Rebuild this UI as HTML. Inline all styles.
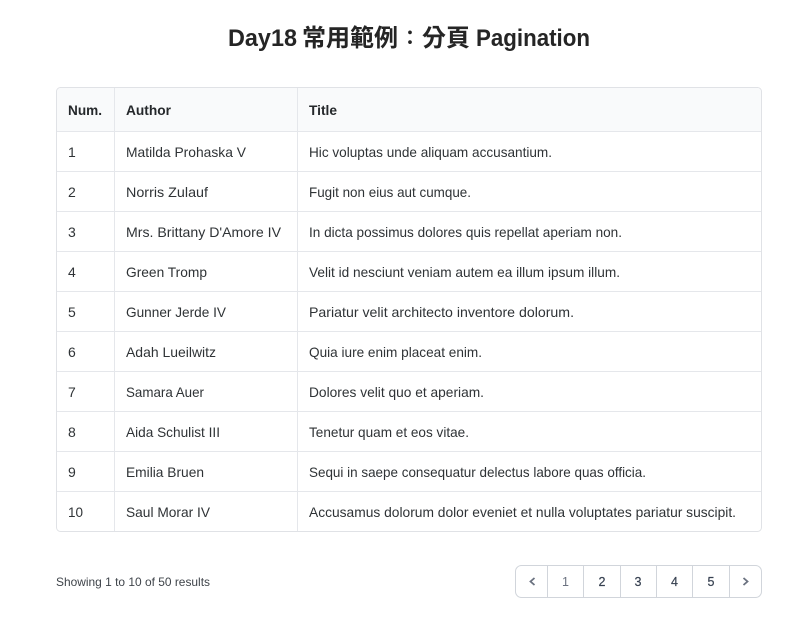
<!DOCTYPE html>
<html lang="zh-Hant">
<head>
<meta charset="utf-8">
<title>Day18 常用範例：分頁 Pagination</title>
<style>
html,body{margin:0;padding:0;background:#fff;width:810px;height:638px;overflow:hidden}
svg{display:block}
text{font-family:"Liberation Sans","Noto Sans CJK TC",sans-serif;fill:#2f3336}
.t{font-size:24px;font-weight:700;fill:#252525}
.k{font-family:"Noto Sans CJK TC",sans-serif}
.h{font-size:14px;font-weight:700;fill:#25282b}
.c{font-size:14px;fill:#2f3336}
.s{font-size:12px;fill:#3f444a}
.p{font-size:12.5px;fill:#374151;text-anchor:middle;stroke:#374151;stroke-width:.2}
</style>
</head>
<body>
<svg xmlns="http://www.w3.org/2000/svg" width="810" height="638" viewBox="0 0 810 638">
<text class="t" x="228" y="46" textLength="69" lengthAdjust="spacingAndGlyphs">Day18</text>
<text class="t k" x="302" y="46">常用範例</text>
<text class="t k" x="400" y="44.5" style="font-size:20px">：</text>
<text class="t k" x="422" y="46">分頁</text>
<text class="t" x="476" y="46" textLength="114" lengthAdjust="spacingAndGlyphs">Pagination</text>

<rect x="56.5" y="87.5" width="705" height="444" rx="4" fill="#fff" stroke="#e0e2e6"/>
<path d="M57 131V92a4 4 0 0 1 4-4H757a4 4 0 0 1 4 4V131Z" fill="#f9fafb"/>
<g fill="#e5e7eb">
<rect x="57" y="131" width="704" height="1"/>
<rect x="57" y="171" width="704" height="1"/>
<rect x="57" y="211" width="704" height="1"/>
<rect x="57" y="251" width="704" height="1"/>
<rect x="57" y="291" width="704" height="1"/>
<rect x="57" y="331" width="704" height="1"/>
<rect x="57" y="371" width="704" height="1"/>
<rect x="57" y="411" width="704" height="1"/>
<rect x="57" y="451" width="704" height="1"/>
<rect x="57" y="491" width="704" height="1"/>
<rect x="114" y="88" width="1" height="443"/>
<rect x="297" y="88" width="1" height="443"/>
</g>

<text class="h" x="68" y="115" textLength="34" lengthAdjust="spacingAndGlyphs">Num.</text>
<text class="h" x="126" y="115" textLength="45" lengthAdjust="spacingAndGlyphs">Author</text>
<text class="h" x="309" y="115" textLength="28" lengthAdjust="spacingAndGlyphs">Title</text>

<text class="c" x="68" y="157">1</text>
<text class="c" x="126" y="157" textLength="120" lengthAdjust="spacingAndGlyphs">Matilda Prohaska V</text>
<text class="c" x="309" y="157" textLength="243" lengthAdjust="spacingAndGlyphs">Hic voluptas unde aliquam accusantium.</text>

<text class="c" x="68" y="197">2</text>
<text class="c" x="126" y="197" textLength="82" lengthAdjust="spacingAndGlyphs">Norris Zulauf</text>
<text class="c" x="309" y="197" textLength="162" lengthAdjust="spacingAndGlyphs">Fugit non eius aut cumque.</text>

<text class="c" x="68" y="237">3</text>
<text class="c" x="126" y="237" textLength="155" lengthAdjust="spacingAndGlyphs">Mrs. Brittany D'Amore IV</text>
<text class="c" x="309" y="237" textLength="313" lengthAdjust="spacingAndGlyphs">In dicta possimus dolores quis repellat aperiam non.</text>

<text class="c" x="68" y="277">4</text>
<text class="c" x="126" y="277" textLength="81" lengthAdjust="spacingAndGlyphs">Green Tromp</text>
<text class="c" x="309" y="277" textLength="311" lengthAdjust="spacingAndGlyphs">Velit id nesciunt veniam autem ea illum ipsum illum.</text>

<text class="c" x="68" y="317">5</text>
<text class="c" x="126" y="317" textLength="100" lengthAdjust="spacingAndGlyphs">Gunner Jerde IV</text>
<text class="c" x="309" y="317" textLength="265" lengthAdjust="spacingAndGlyphs">Pariatur velit architecto inventore dolorum.</text>

<text class="c" x="68" y="357">6</text>
<text class="c" x="126" y="357" textLength="90" lengthAdjust="spacingAndGlyphs">Adah Lueilwitz</text>
<text class="c" x="309" y="357" textLength="173" lengthAdjust="spacingAndGlyphs">Quia iure enim placeat enim.</text>

<text class="c" x="68" y="397">7</text>
<text class="c" x="126" y="397" textLength="78" lengthAdjust="spacingAndGlyphs">Samara Auer</text>
<text class="c" x="309" y="397" textLength="175" lengthAdjust="spacingAndGlyphs">Dolores velit quo et aperiam.</text>

<text class="c" x="68" y="437">8</text>
<text class="c" x="126" y="437" textLength="94" lengthAdjust="spacingAndGlyphs">Aida Schulist III</text>
<text class="c" x="309" y="437" textLength="160" lengthAdjust="spacingAndGlyphs">Tenetur quam et eos vitae.</text>

<text class="c" x="68" y="477">9</text>
<text class="c" x="126" y="477" textLength="78" lengthAdjust="spacingAndGlyphs">Emilia Bruen</text>
<text class="c" x="309" y="477" textLength="337" lengthAdjust="spacingAndGlyphs">Sequi in saepe consequatur delectus labore quas officia.</text>

<text class="c" x="68" y="517" style="font-size:13.5px">10</text>
<text class="c" x="126" y="517" textLength="84" lengthAdjust="spacingAndGlyphs">Saul Morar IV</text>
<text class="c" x="309" y="517" textLength="427" lengthAdjust="spacingAndGlyphs">Accusamus dolorum dolor eveniet et nulla voluptates pariatur suscipit.</text>

<text class="s" x="56" y="586" textLength="154" lengthAdjust="spacingAndGlyphs">Showing 1 to 10 of 50 results</text>

<rect x="515.5" y="565.5" width="246" height="32" rx="6" fill="#fff" stroke="#d1d5db"/>
<g fill="#d1d5db">
<rect x="547" y="566" width="1" height="31"/>
<rect x="583" y="566" width="1" height="31"/>
<rect x="620" y="566" width="1" height="31"/>
<rect x="656" y="566" width="1" height="31"/>
<rect x="692" y="566" width="1" height="31"/>
<rect x="729" y="566" width="1" height="31"/>
</g>
<path d="M534.5 578 L530.5 581.5 L534.5 585" fill="none" stroke="#6b7280" stroke-width="1.8"/>
<path d="M743.5 578 L747.5 581.5 L743.5 585" fill="none" stroke="#6b7280" stroke-width="1.8"/>
<text class="p" x="565.5" y="586" style="fill:#6b7280;stroke:none">1</text>
<text class="p" x="602" y="586">2</text>
<text class="p" x="638" y="586">3</text>
<text class="p" x="674.5" y="586">4</text>
<text class="p" x="711" y="586">5</text>
</svg>
</body>
</html>
